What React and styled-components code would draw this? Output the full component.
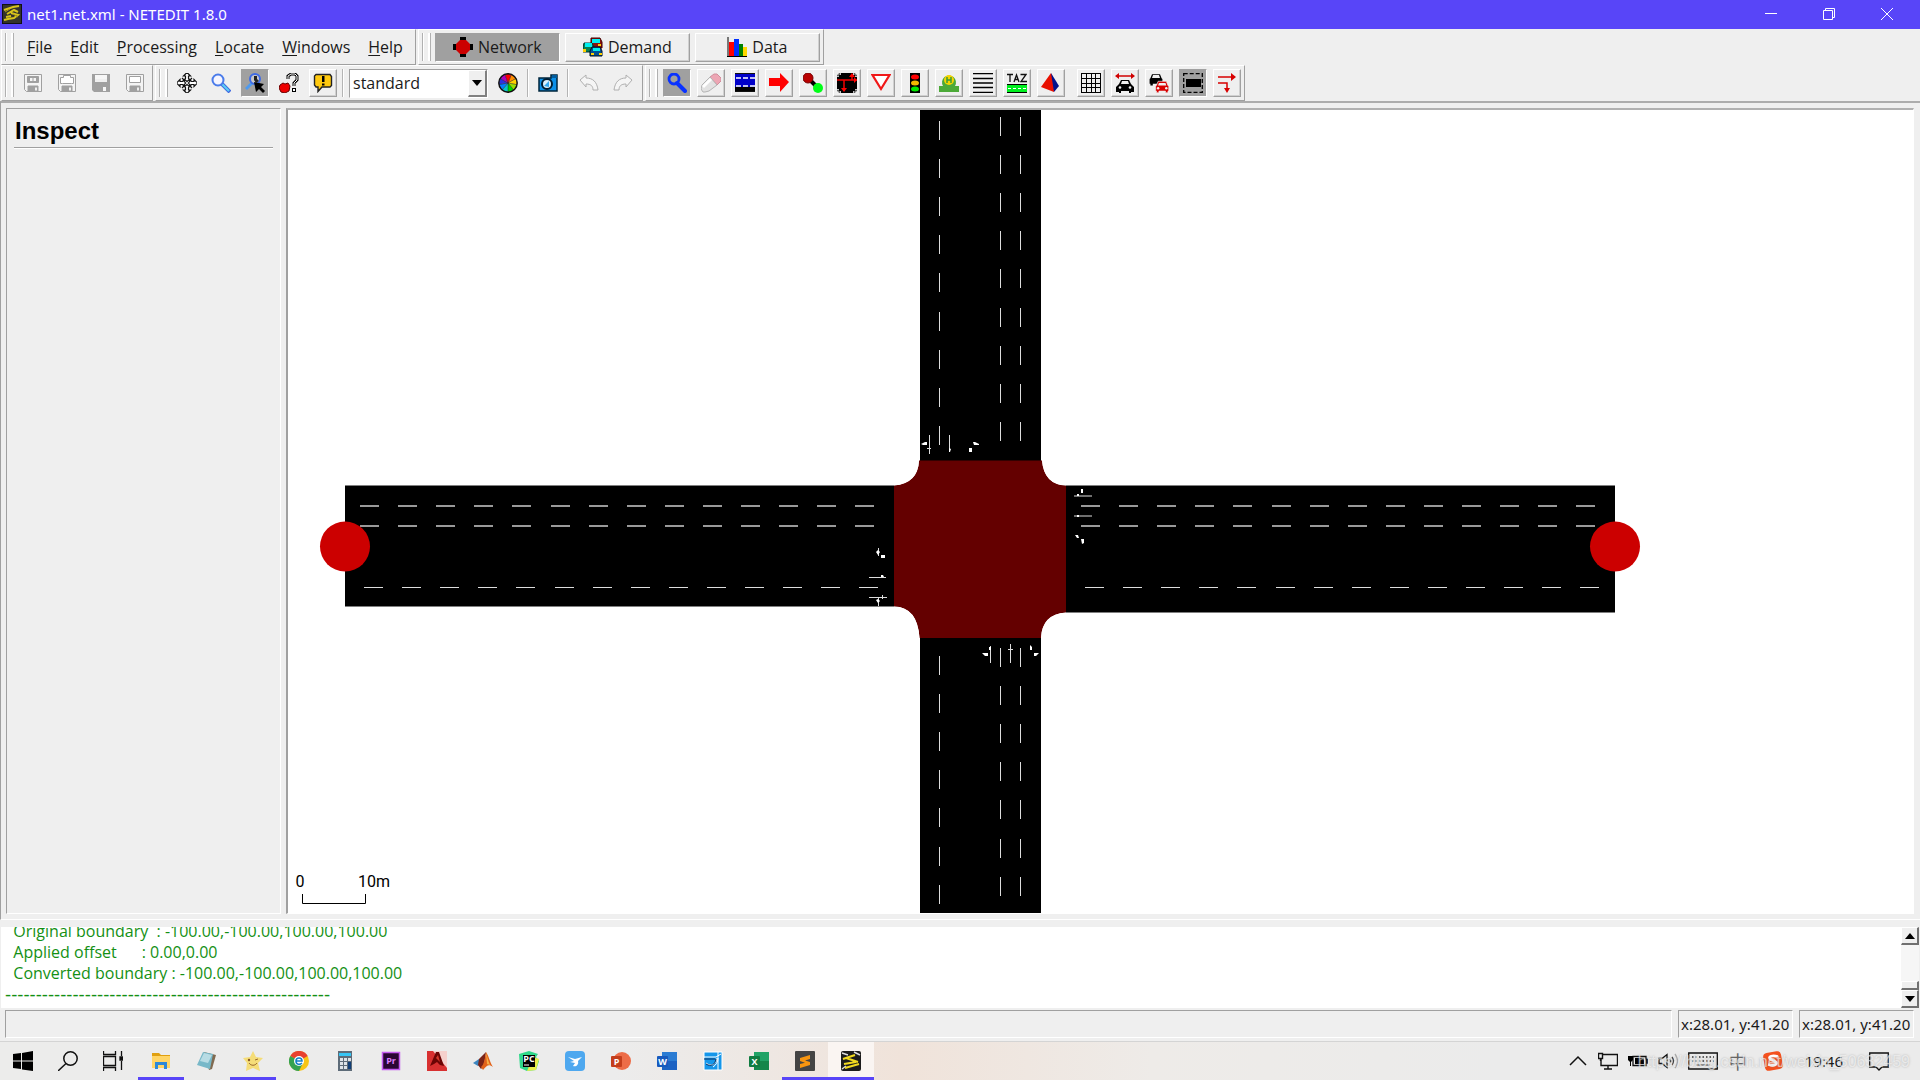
import React, { useState } from "react";
import styled, { createGlobalStyle, css } from "styled-components";

const range = (n) => Array.from({ length: n }, (_, i) => i);

/* ---------- icons, all on a 20x20 grid ---------- */

const wheel = ["#ff8c00", "#ffd000", "#9be000", "#00d800", "#00c8c8", "#0080ff", "#3030e0", "#b000c0", "#ff0000"];

const SumoMark = () => (
  <>
    <path d="M2 6l9-3 6-1M5 10l7-4 4 2M2 16l4-1 6-1 4-3-7-2M4 13l5-1" stroke="#d8c41c" strokeWidth="2" fill="none" />
    <path d="M3 8l5-3M11 10l5 3" stroke="#a8941a" fill="none" />
  </>
);

const diskIcon = (inner) => (
  <g fill="none" stroke="#a0a0a0">
    <path d="M1.500 1.500h17v17h-15l-2-2z" fill="#f4f4f4" />
    {inner}
    <path d="M5 18v-5h10v5z" fill="#a0a0a0" />
    <path d="M12 14.500h2v3h-2z" fill="#efefef" stroke="none" />
  </g>
);

const carPath = "M3 9l2-5h10l2 5 1 1v6h-1v2h-3v-2H6v2H3v-2H2v-6z";

const icons = {
  app: (
    <>
      <path d="M0 0h20v20H0z" fill="#111" />
      <path d="M1 1h18v18H1z" fill="#33332c" />
      <SumoMark />
    </>
  ),
  saveNet: diskIcon(
    <>
      <path d="M4.500 3.500h11v6h-11z" fill="#a0a0a0" />
      <path d="M7 5h6v3H7z" fill="#f4f4f4" stroke="none" />
      <path d="M10 3v7" />
    </>
  ),
  saveAdd: diskIcon(<path d="M5.500 10.500h-2v-6h3v-2h7v2h3v6h-2z" fill="#fff" />),
  saveTls: (
    <g fill="#a0a0a0">
      <path d="M1 1h18v18H3l-2-2z" />
      <path d="M4 2h12v7H4z" fill="#efefef" />
      <path d="M4 2h12v4H4zM12 14h3v4h-3z" fill="#f6f6f6" />
    </g>
  ),
  saveTaz: diskIcon(<path d="M4.500 3.500h11v6h-11z" fill="#fff" />),
  recenter: (
    <g fill="#fff" stroke="#111" strokeWidth="1.200">
      {[0, 90, 180, 270].map((a) => (
        <path key={a} transform={`rotate(${a} 10 10)`} d="M10 -.5l3.500 3.500h-2v2.500l1 1-2.500 2-2.500-2 1-1V3h-2z" />
      ))}
      <path d="M5 5l3 3M15 5l-3 3M5 15l3-3M15 15l-3-3" />
    </g>
  ),
  zoom: (
    <>
      <path d="M11 11l8 8" stroke="#4169e1" strokeWidth="4" />
      <path d="M11 11l7 7" stroke="#5bd0f5" strokeWidth="2" />
      <circle cx="7" cy="7" r="5.500" fill="#f5f5ff" stroke="#4a7bea" strokeWidth="2" />
    </>
  ),
  zoomStyle: (
    <>
      <path d="M7 10l-6 6" stroke="#4d9af0" strokeWidth="3" />
      <circle cx="10" cy="6" r="5" fill="#c8c8c8" stroke="#3e6ae6" strokeWidth="2" />
      <path d="M9 3h3v3l2 2-3 2-2-3z" fill="#222" />
      <path d="M9 9l10 2-3 3 4 4-2 2-4-4-3 3z" fill="#000" />
    </>
  ),
  locate: (
    <>
      <path d="M1 12l3-2 2 1 3-1 2 3-1 5-4 2-4-1-2-4z" fill="#ee0000" stroke="#600" />
      <path d="M9 6V3l3-2h4l2 2v4l-3 3v3" fill="none" stroke="#000" strokeWidth="3" />
      <path d="M9 6V3l3-2h4l2 2v4l-3 3v3" fill="none" stroke="#fff" />
      <path d="M13 15h4v4h-4z" />
      <path d="M14 16h2v2h-2z" fill="#fff" />
    </>
  ),
  tooltip: (
    <>
      <path d="M3 1.500h14l1.500 2v9L17 14H9l-4 4.500V14H3l-1.500-2v-9z" fill="#ffc90e" stroke="#222" strokeWidth="1.400" />
      <path d="M9 3h2.500v6H9zM9 10.500h2.500v2H9z" />
    </>
  ),
  wheel: (
    <>
      {wheel.map((c, i) => {
        const a = (i * 2 * Math.PI) / 9 - 1.2;
        const b = a + (2 * Math.PI) / 9;
        return (
          <path
            key={c}
            fill={c}
            stroke="#222"
            strokeWidth=".4"
            d={`M10 10L${10 + 9 * Math.cos(a)} ${10 + 9 * Math.sin(a)}A9 9 0 0 1 ${10 + 9 * Math.cos(b)} ${10 + 9 * Math.sin(b)}z`}
          />
        );
      })}
      <circle cx="10" cy="10" r="9.200" fill="none" stroke="#111" strokeWidth="1.400" />
    </>
  ),
  camera: (
    <>
      <path d="M1 5h12V2h6v16H1z" fill="#0a8fe8" stroke="#00263c" strokeWidth="1.500" />
      <path d="M14 2h5v3h-5z" fill="#035c9c" />
      <circle cx="9" cy="11" r="5" fill="#d8f0ff" stroke="#001c30" strokeWidth="2" />
      <path d="M6 13l5-5v6z" fill="#33a7f0" />
    </>
  ),
  undo: <path d="M1 7l6-5v3c7 0 11 4 12 12h-5c0-4-2-6-7-6v3z" fill="#f5f5f5" stroke="#b0b0b0" />,
  redo: <path d="M19 7l-6-5v3C6 5 2 9 1 17h5c0-4 2-6 7-6v3z" fill="#f5f5f5" stroke="#b0b0b0" />,
  inspect: (
    <>
      <path d="M10 10l8 8" stroke="#0a32ff" strokeWidth="4" strokeLinecap="round" />
      <circle cx="7" cy="6" r="5" fill="none" stroke="#0a32ff" strokeWidth="2.800" />
    </>
  ),
  eraser: (
    <>
      <path d="M9 4l4-3h3l4 4v3l-4 4z" fill="#eda6b4" stroke="#d08e9c" />
      <path d="M9 4l7 8-8 6-4 1H2l-2-3 1-4z" fill="#e2e2e2" stroke="#b4b4b4" />
      <path d="M1 13l8-8 2 2-8 8z" fill="#fff" />
    </>
  ),
  edge: (
    <>
      <path d="M0 0h20v14H0z" fill="#0000c8" />
      <path d="M0 14h20v5H0z" />
      <path d="M0 0h20v1H0zM0 18h20v1H0z" fill="#111" />
      <path d="M1 5h5M8 5h5M15 5h5M1 13h5M8 13h5M15 13h5" stroke="#fff" strokeWidth="1.400" />
    </>
  ),
  move: <path d="M0 5h11V0l9 9-9 10v-6H0z" fill="#ff0000" />,
  connect: (
    <>
      <path d="M5 5l10 10" stroke="#000" strokeWidth="4" />
      <circle cx="5" cy="5" r="5" fill="#b80000" stroke="#700" />
      <circle cx="15" cy="15" r="5" fill="#00ff18" />
    </>
  ),
  prohibit: (
    <>
      <path d="M0 0h20v20H0z" />
      <path d="M0 7h20M7 7v10M15 7V2" stroke="#f00000" strokeWidth="1.500" />
      <path d="M4 15h6l-3 4zM12 4l3-4 3 4zM17 4l3 3-3 3z" fill="#f00" />
      <path d="M1 0v4M19 0v4M0 1h4M16 1h4M1 16v4M19 16v4M0 19h4M16 19h4" stroke="#fff" strokeWidth="1.500" strokeDasharray="1.500 1" />
    </>
  ),
  priority: <path d="M1.500 2h17L10 16z" fill="#fff" stroke="#f01818" strokeWidth="2.200" />,
  light: (
    <>
      <path d="M5 0h10v20H5z" />
      <ellipse cx="10" cy="4" rx="4" ry="2.500" fill="#f00" />
      <ellipse cx="10" cy="10" rx="4" ry="2.500" fill="#f0b800" />
      <ellipse cx="10" cy="16" rx="4" ry="2.500" fill="#00e800" />
    </>
  ),
  stop: (
    <>
      <path d="M0 13h4A7 7 0 1 1 16 13h4v6H0z" fill="#4caa38" />
      <circle cx="10" cy="7" r="5" fill="#f5d400" />
      <path d="M8 4v6M12 4v6M8 7h4" stroke="#3d9a35" strokeWidth="1.500" />
    </>
  ),
  crossing: <path d="M0 .5h20M0 5.500h20M0 10h20M0 14.500h20M0 19.500h20" stroke="#000" strokeWidth="1.700" />,
  taz: (
    <>
      <path d="M0 1.500h6M3 1v8M7 9l2.500-7L12 9M8 6.500h3M13.500 1.500H19L14 8.500h6" stroke="#111" strokeWidth="1.300" fill="none" />
      <path d="M0 12h20v8H0z" fill="#00f020" />
      <path d="M0 11.500h20M0 19.500h20" stroke="#000" />
      <path d="M1 15.500h18" stroke="#fff" strokeDasharray="3 2" />
    </>
  ),
  shape: (
    <>
      <path d="M10 0l8 13-5 6-3-5z" fill="#00128c" />
      <path d="M10 0L0 14l13 5z" fill="#e81000" />
    </>
  ),
  grid: (
    <g fill="none" stroke="#000" shapeRendering="crispEdges">
      <path d="M.5.500h19v19H.5z" />
      <path d="M0 5.500h20M0 10.500h20M0 14.500h20M5.500 0v20M10.500 0v20M14.500 0v20" />
    </g>
  ),
  junctionShape: (
    <>
      <path d="M2 3h16" stroke="#d00000" strokeWidth="1.500" />
      <path d="M0 3l4-3v6zM20 3l-4-3v6z" fill="#d00000" />
      <path d="M1 14l3-3 2-4h8l2 4 3 3v5h-3v1h-2v-2H6v2H4v-1H1z" />
      <path d="M6 11l1-3h6l1 3z" fill="#efefef" />
      <circle cx="5" cy="14.500" r="1.300" fill="#efefef" />
      <circle cx="15" cy="14.500" r="1.300" fill="#efefef" />
    </>
  ),
  demandSpread: (
    <>
      <path transform="translate(-1 -2) scale(.8)" d={carPath} />
      <path d="M3 5l1-3h6l1 3z" fill="#efefef" />
      <g transform="translate(5 5) scale(.82)">
        <path d={carPath} fill="#d80000" stroke="#efefef" strokeWidth=".8" />
        <path d="M5 9l1-3h8l1 3z" fill="#efefef" />
        <circle cx="5" cy="12.500" r="1.500" fill="#efefef" />
        <circle cx="15" cy="12.500" r="1.500" fill="#efefef" />
      </g>
    </>
  ),
  selectArea: (
    <>
      <path d="M.7.700h18.600v18.600H.7z" fill="none" stroke="#000" strokeWidth="1.300" strokeDasharray="4 2" />
      <path d="M3 6h15v8H3z" />
    </>
  ),
  chain: (
    <>
      <path d="M1 4h14M1 10h9v6" stroke="#d80000" strokeWidth="1.500" fill="none" />
      <path d="M14 0l5 4-5 4zM7 15h6l-3 5z" fill="#d80000" />
    </>
  ),
  network: (
    <>
      <path d="M7 0h6v20H7zM0 7h20v6H0z" />
      <path d="M7 3h6l4 4v6l-4 4H7l-4-4V7z" fill="#cc0000" />
    </>
  ),
  demand: (
    <g strokeWidth="1">
      <path d="M8 1h9l2 4v6H8z" fill="#8c1010" stroke="#400" />
      <path d="M9 2h8v4H9z" fill="#00f0f0" />
      <path d="M15 7h3v2h-3z" fill="#ffd000" />
      <path d="M1 6h8l2 4v5H0v-5z" fill="#0a8050" stroke="#033" />
      <path d="M2 6h7v4H2z" fill="#00f0f0" />
      <path d="M0 12h3v3H0z" fill="#ffd000" />
      <path d="M9 10h8l2 4v5H7v-5z" fill="#004f90" stroke="#012" />
      <path d="M10 11h7v3h-7z" fill="#00f0f0" />
      <path d="M8 16h3v2H8zM16 16h3v2h-3z" fill="#ffd000" />
    </g>
  ),
  data: (
    <>
      <path d="M2 5h5v15H2z" fill="#ff0000" />
      <path d="M7 2h5v18H7z" fill="#0030ff" />
      <path d="M12 7h4v13h-4z" fill="#008000" />
      <path d="M16 10h4v10h-4z" fill="#ffd800" />
      <path d="M1 0v20M0 19.500h20" stroke="#000" />
    </>
  ),
  windows: <path d="M0 3l8-1v7.500H0zM9 2l11-2v9.500H9zM0 10.500h8V18l-8-1zM9 10.500h11V20L9 18.500z" />,
  search: (
    <g fill="none" stroke="#111" strokeWidth="1.500">
      <circle cx="12.500" cy="7.500" r="6.700" />
      <path d="M8 12.500L0 20" />
    </g>
  ),
  taskView: (
    <g fill="none" stroke="#111" strokeWidth="1.300">
      <path d="M.5 0v3.500h12V0M.5 20v-3.500h12V20M.5 5.500h12v9H.5zM18.500 0v5M18.500 10v9" />
      <path d="M17 6h3v3h-3z" fill="#111" />
    </g>
  ),
  folder: (
    <>
      <path d="M1 2h7l2 2h9v6H1z" fill="#e0a010" />
      <path d="M1 5h18v12H1z" fill="#ffd566" />
      <path d="M4 18v-7h12v7h-3v-4H7v4z" fill="#2b88d8" />
    </>
  ),
  notes: (
    <>
      <path d="M7 1l12 3-4 14-3 1z" fill="#806a50" />
      <path d="M6 1l10 2-3 15-13-4z" fill="#78b8c8" />
      <path d="M7 2l8 2-4 8-8-2z" fill="#b8dce4" />
    </>
  ),
  star: (
    <>
      <path d="M10 0l3 6 7 1-5 5 2 8-7-3-7 3 1-8-4-5 7-1z" fill="#f5dd78" />
      <path d="M6 12c2 3 6 3 8 0M12 9l3-1" stroke="#9a6a30" fill="none" />
      <circle cx="6" cy="9" r="1.200" fill="#8a5a28" />
    </>
  ),
  chrome: (
    <>
      <circle cx="10" cy="10" r="10" fill="#f7c515" />
      <path d="M10 10L1.300 5A10 10 0 0 1 18.700 5z" fill="#e8402f" />
      <path d="M10 10L1.300 5A10 10 0 0 0 10 20l4-8z" fill="#35a251" />
      <circle cx="10" cy="10" r="5" fill="#fff" />
      <path d="M7 10h6c0-4-6-4-6 0s4 4 6 2" fill="none" stroke="#1680c8" strokeWidth="1.600" />
    </>
  ),
  calc: (
    <>
      <path d="M3 0h14v20H3z" fill="#5d6b78" />
      <path d="M4 2h12v3H4z" fill="#35c5f5" />
      <path d="M5 7h3v3H5zM9 7h3v3H9zM13 7h3v3h-3zM5 11h3v3H5zM9 11h3v3H9zM5 15h3v3H5zM9 15h3v3H9z" fill="#dde3e8" />
      <path d="M13 11h3v7h-3z" fill="#123f78" />
    </>
  ),
  acad: (
    <>
      <path d="M0 0h20v20H0z" fill="#d83030" />
      <path d="M6 0h14v17z" fill="#f6d0cc" />
      <path d="M3 15L9 1h3l5 14-4-1-3-3-3 2z" fill="#6c0505" />
      <path d="M9 7l2-3 2 7z" fill="#d63a2a" />
    </>
  ),
  matlab: (
    <>
      <path d="M0 12l6-4 3 4-4 3z" fill="#3c86c0" />
      <path d="M6 8l7-7-2 14-3 3-3-4z" fill="#7a2418" />
      <path d="M13 1c3 4 4 11 7 15-4-3-6-2-10 3l-2-3c3-2 4-9 5-15z" fill="#e2631a" />
      <path d="M13 1c1 4 2 9 4 13l-3-1z" fill="#f6b048" />
    </>
  ),
  visual: (
    <>
      <path d="M1 1h18v18H1z" fill="#1496ea" stroke="#fff" />
      <path d="M1 6h12l5-3M3 12c5 4 10 2 11-5M10 16c3-2 5-5 5-9M15 1v18" fill="none" stroke="#fff" />
      <path d="M1 8h11M3 13c5 3 9 1 10-5" stroke="#0a2f60" fill="none" />
    </>
  ),
  bird: (
    <>
      <rect width="20" height="20" rx="4" fill="#4ea8ef" />
      <path d="M3 6l7 2 7-2-4 4c1 4-2 6-5 5l2-3-5-1 4-1z" fill="#fff" />
    </>
  ),
  sublime: (
    <>
      <rect width="20" height="20" rx="1" fill="#444" />
      <path d="M5 7l10-3v4l-5 1.500 5 1.500v3L5 17v-4l5-1.300L5 10z" fill="#f79510" />
    </>
  ),
  netedit: (
    <>
      <rect width="20" height="20" rx="2" fill="#1c1c1c" />
      <path d="M1 2l6 2M13 1l6 3M1 18l4-3" stroke="#ddd" strokeWidth="1.500" />
      <path d="M2 8l12-4M5 7l12 4M3 13l12-2M4 17l14-4" stroke="#f2da20" strokeWidth="2.200" fill="none" />
    </>
  ),
  chevron: <path d="M2 14l8-8 8 8" fill="none" stroke="#111" strokeWidth="1.500" />,
  monitor: (
    <g fill="none" stroke="#111" strokeWidth="1.400">
      <path d="M5 3.500h14.500v11H3V8M6 18h8M10 14v4" />
      <path d="M.5 2.500h4v5h-4zM2.500 7v3" />
    </g>
  ),
  battery: (
    <>
      <path d="M5 5.500h13v9H5zM19 8h1v4h-1z" fill="none" stroke="#111" strokeWidth="1.300" />
      <path d="M7 7h9v6H7zM0 5h5v4l-2 2v4H2v-4L0 9z" />
    </>
  ),
  volume: (
    <g fill="none" strokeWidth="1.300">
      <path d="M1 7.500h3l5-4v13l-5-4H1z" stroke="#111" />
      <path d="M12 8q1.500 2 0 4M14 6q3 4 0 8" stroke="#444" />
      <path d="M17 3q5 7 0 14" stroke="#aaa" />
    </g>
  ),
  sogou: (
    <>
      <rect x="1" y="1" width="18" height="18" rx="4" transform="rotate(-10 10 10)" fill="#f4511e" />
      <path d="M15 5.500c-9-2-11 2-5 4s4 6-5 4" fill="none" stroke="#fff" strokeWidth="2.800" />
    </>
  ),
  notice: <path d="M.7 2h18.600v14H13l-3 3-3-3H.7z" fill="none" stroke="#111" strokeWidth="1.300" />,
};

const Icon = ({ name }) => <Glyph viewBox="0 0 20 20" aria-hidden="true">{icons[name]}</Glyph>;

const office = {
  powerpoint: { letter: "P", dark: "#c43e1c", light: "#ed6c47", round: true },
  word: { letter: "W", dark: "#185abd", light: "#2b7cd3" },
  excel: { letter: "X", dark: "#107c41", light: "#21a366" },
};

const TaskIcon = ({ name }) => {
  if (office[name]) {
    const { letter, dark, light, round } = office[name];
    return (
      <Glyph viewBox="0 0 20 20">
        {round ? <circle cx="11" cy="10" r="9" fill={light} /> : <path d="M5 1h15v18H5z" fill={light} />}
        {!round && <path d="M5 10h15v9H5z" fill={dark} opacity=".75" />}
        <rect y="5" width="11" height="11" rx="1" fill={dark} />
        <Letter x="5.500" y="14" fill="#fff">{letter}</Letter>
      </Glyph>
    );
  }
  if (name === "premiere") {
    return (
      <Glyph viewBox="0 0 20 20">
        <path d="M1.500 1.500h17v17h-17z" fill="#2a0634" stroke="#c45cf0" strokeWidth="1.500" />
        <Letter x="10" y="13" fill="#dd80ff">Pr</Letter>
      </Glyph>
    );
  }
  if (name === "pycharm") {
    return (
      <Glyph viewBox="0 0 20 20">
        <path d="M0 3l10-3 9 3-2 3 3 4-3 9-9 1-7-3z" fill="#2fd88a" />
        <path d="M14 6l6 2-3 11-9 1z" fill="#e8ee4a" />
        <path d="M4 4h12v12H4z" />
        <Letter x="10" y="11" fill="#fff">PC</Letter>
        <path d="M5 14h5" stroke="#fff" />
      </Glyph>
    );
  }
  return <Icon name={name} />;
};

/* ---------- network drawing ---------- */

const Dashes = ({ x, y, count, vertical, tone = "#ddd", weight = 1 }) =>
  range(count).map((i) => {
    const step = Math.round(i * 38.1);
    return vertical ? (
      <rect key={i} x={x} y={y + step} width={weight} height="19" fill={tone} />
    ) : (
      <rect key={i} x={x + step} y={y} width="19" height={weight} fill={tone} />
    );
  });

const NetworkView = () => (
  <NetSvg viewBox="288 110 1625 803" preserveAspectRatio="xMidYMid slice" role="img" aria-label="Network">
    <path d="M920 110h121v803H920zM345 485.500h560v121H345zM1055 485.500h560v127h-560z" />
    <path
      d="M919 460.500h123q2 24 24 25V612.500q-24 2-25 25.500H919.500q-2-31-25.500-31.500V485.500q24-2 25-25z"
      fill="#640000"
    />
    <path d="M894 606.500v31.500h25.500q-2-31-25.500-31.500zM1066 612.500v25.500h-25q1-24 25-25.500zM894 485.500v-25h25q-1 23-25 25zM1066 485.500v-25h-24q2 24 24 25z" fill="#fff" />
    <g shapeRendering="crispEdges">
      <Dashes x={360} y={505} count={14} tone="#999" weight={2} />
      <Dashes x={360} y={525} count={14} tone="#999" weight={2} />
      <Dashes x={364} y={587} count={14} />
      <Dashes x={1081} y={505} count={14} tone="#999" weight={2} />
      <Dashes x={1081} y={525} count={14} tone="#999" weight={2} />
      <Dashes x={1085} y={587} count={14} />
      <Dashes vertical x={939} y={121} count={9} />
      <Dashes vertical x={1000} y={117} count={9} />
      <Dashes vertical x={1020} y={117} count={9} />
      <Dashes vertical x={939} y={656} count={7} />
      <Dashes vertical x={1000} y={648} count={7} />
      <Dashes vertical x={1020} y={648} count={7} />
    </g>
    {/* turning arrows in front of the stop lines */}
    <g stroke="#ddd" fill="none">
      <path d="M929.500 435v19M949.500 435v17M927 448.500h4M990.500 646v17M1010.500 644v19M1008 649.500h5" />
      <path d="M1074 496h18M1074 516h18M869 577.500h17M869 597.500h18M878.500 548v8M878.500 598v8M882.500 595v4" />
    </g>
    <path
      d="M921 444l4-2h2v3h-4zM949 448l2 1-1 3h-1zM969 448h3v4h-3zM973 442h2l4 2v1h-5zM1081 489h2v4h-2zM1077 494h2v2h-2zM1077 515h2v2h-2zM1075 535h3l1 3h-2zM1081 539h3v4l-2 1zM876 552l2-2 2 2-2 3zM881 555h4v3h-4zM881 575h2l1 2h-3zM876 600l2-1 2 2-2 2zM982 653l3 0h3v3h-3zM989 647h2v3h-2zM1030 645l2 2v3h-2zM1034 653h5l-3 3h-2z"
      fill="#fff"
    />
    <circle cx="345" cy="546.500" r="25" fill="#cc0000" />
    <circle cx="1615" cy="546.500" r="25" fill="#cc0000" />
    <path d="M302.500 894v9.500h63V894" fill="none" stroke="#000" />
    <ScaleText x="300" y="887">0</ScaleText>
    <ScaleText x="374" y="887">10m</ScaleText>
  </NetSvg>
);

/* ---------- window ---------- */

const menus = ["File", "Edit", "Processing", "Locate", "Windows", "Help"];
const modes = [
  ["Network", "network"],
  ["Demand", "demand"],
  ["Data", "data"],
];
const fileTools = ["saveNet", "saveAdd", "saveTls", "saveTaz"];
const editTools = ["inspect", "eraser", "edge", "move", "connect", "prohibit", "priority", "light", "stop", "crossing", "taz", "shape"];
const viewTools = ["grid", "junctionShape", "demandSpread", "selectArea", "chain"];
const log = [
  "  Original boundary  : -100.00,-100.00,100.00,100.00",
  "  Applied offset      : 0.00,0.00",
  "  Converted boundary : -100.00,-100.00,100.00,100.00",
];
const tasks = ["folder", "notes", "star", "chrome", "calc", "premiere", "acad", "matlab", "pycharm", "bird", "powerpoint", "word", "visual", "excel", "sublime", "netedit"];
const running = ["folder", "star", "sublime", "netedit"];

const App = () => {
  const [mode, setMode] = useState("Network");
  const [tool, setTool] = useState("inspect");

  return (
    <>
      <GlobalStyle />
      <Window>
        <TitleBar>
          <Icon name="app" />
          <Title>net1.net.xml - NETEDIT 1.8.0</Title>
          <CaptionButton aria-label="Minimize">
            <CaptionSvg><path d="M0 5.500h12" /></CaptionSvg>
          </CaptionButton>
          <CaptionButton aria-label="Restore">
            <CaptionSvg><path d="M.5 2.500h9v9h-9zM2.500 2.500v-2h9v9h-2" /></CaptionSvg>
          </CaptionButton>
          <CaptionButton aria-label="Close">
            <CaptionSvg><path d="M0 0l12 12M12 0L0 12" /></CaptionSvg>
          </CaptionButton>
        </TitleBar>

        <ToolRow>
          <MenuBar>
            <Grip />
            <MenuList>
              {menus.map((m) => (
                <MenuButton key={m}>
                  <u>{m[0]}</u>
                  {m.slice(1)}
                </MenuButton>
              ))}
            </MenuList>
          </MenuBar>
          <ModeBar>
            <Grip />
            {modes.map(([label, icon]) => (
              <ModeButton key={label} $pressed={mode === label} onClick={() => setMode(label)}>
                <Icon name={icon} />
                {label}
              </ModeButton>
            ))}
          </ModeBar>
        </ToolRow>

        <ToolRow>
          <ToolBar>
            <Grip />
            {fileTools.map((t) => (
              <ToolButton key={t} $flat disabled aria-label={t}><Icon name={t} /></ToolButton>
            ))}
          </ToolBar>
          <ToolBar>
            <Grip />
            <ToolButton $flat aria-label="Recenter"><Icon name="recenter" /></ToolButton>
            <ToolButton $flat aria-label="Zoom"><Icon name="zoom" /></ToolButton>
            <ToolButton $pressed aria-label="Zoom style"><Icon name="zoomStyle" /></ToolButton>
            <ToolButton $flat aria-label="Locate"><Icon name="locate" /></ToolButton>
            <ToolButton aria-label="Tooltips"><Icon name="tooltip" /></ToolButton>
            <Divider />
            <Combo>
              <select aria-label="Coloring scheme" defaultValue="standard">
                <option>standard</option>
              </select>
              <ComboArrow><Arrow $down /></ComboArrow>
            </Combo>
            <ToolButton $flat aria-label="Colors"><Icon name="wheel" /></ToolButton>
            <Divider />
            <ToolButton $flat aria-label="Snapshot"><Icon name="camera" /></ToolButton>
            <Divider />
            <HistoryGroup>
              <ToolButton $flat disabled aria-label="Undo"><Icon name="undo" /></ToolButton>
              <ToolButton $flat disabled aria-label="Redo"><Icon name="redo" /></ToolButton>
            </HistoryGroup>
          </ToolBar>
          <ToolBar>
            <Grip />
            {editTools.map((t) => (
              <ToolButton key={t} $pressed={tool === t} aria-label={t} onClick={() => setTool(t)}>
                <Icon name={t} />
              </ToolButton>
            ))}
            <Spacer />
            {viewTools.map((t) => (
              <ToolButton key={t} $pressed={t === "selectArea"} aria-label={t}><Icon name={t} /></ToolButton>
            ))}
          </ToolBar>
        </ToolRow>

        <Workspace>
          <SidePanel>
            <PanelTitle>Inspect</PanelTitle>
          </SidePanel>
          <Canvas><NetworkView /></Canvas>
        </Workspace>

        <LogArea>
          <LogText role="log">
            {log.map((line) => <LogLine key={line}>{line}</LogLine>)}
            <LogRule>{"-".repeat(53)}</LogRule>
          </LogText>
          <ScrollBar>
            <ScrollButton aria-label="Scroll up"><Arrow /></ScrollButton>
            <ScrollThumb />
            <ScrollButton aria-label="Scroll down"><Arrow $down /></ScrollButton>
          </ScrollBar>
        </LogArea>

        <StatusBar>
          <StatusField $grow />
          <StatusField>x:28.01, y:41.20</StatusField>
          <StatusField>x:28.01, y:41.20</StatusField>
        </StatusBar>

        <TaskBar>
          <SystemButtons>
            {["windows", "search", "taskView"].map((t) => (
              <SystemButton key={t} aria-label={t}><Icon name={t} /></SystemButton>
            ))}
          </SystemButtons>
          {tasks.map((t) => (
            <TaskButton key={t} aria-label={t} $running={running.includes(t)} $active={t === "netedit"}>
              <TaskIcon name={t} />
            </TaskButton>
          ))}
          <Tray>
            <Icon name="chevron" />
            <Icon name="monitor" />
            <Icon name="battery" />
            <Icon name="volume" />
            <KeyboardSvg viewBox="0 0 30 20">
              <path d="M.7 2h28.600v16H.7z" fill="none" stroke="#111" strokeWidth="1.300" />
              <path d="M4 6h22M4 10h22" stroke="#333" strokeWidth="1.500" strokeDasharray="1.500 2" />
              <path d="M8 14h14" stroke="#333" />
            </KeyboardSvg>
            <Ime>中</Ime>
            <Icon name="sogou" />
            <Clock>19:46</Clock>
            <Icon name="notice" />
          </Tray>
          <Watermark>https://blog.csdn.net/weixin_50632459</Watermark>
        </TaskBar>
      </Window>
    </>
  );
};

export default App;

const GlobalStyle = createGlobalStyle`
  * {
    box-sizing: border-box;
  }

  body {
    margin: 0;
    background: #efefef;
    color: #1a1a1a;
    font: 16px/20px "Open Sans", "Noto Sans", sans-serif;
  }

  button, select {
    margin: 0;
    padding: 0;
    border: 0;
    background: none;
    color: inherit;
    font: inherit;
  }
`;

const raised = css`
  border: 1px solid;
  border-color: #fff #a0a0a0 #a0a0a0 #fff;
`;

const sunken = css`
  border: 1px solid;
  border-color: #a0a0a0 #fff #fff #a0a0a0;
`;

const Window = styled.div`
  display: flex;
  flex-direction: column;
  min-height: 100vh;
`;

const Glyph = styled.svg`
  display: block;
  flex: none;
  width: 20px;
  height: 20px;
`;

const Letter = styled.text`
  font: bold 9px "Open Sans", sans-serif;
  text-anchor: middle;
`;

const TitleBar = styled.header`
  display: flex;
  align-items: center;
  height: 29px;
  padding: 0 4px 2px 2px;
  background: #5845f8;
  color: #fff;
`;

const Title = styled.h1`
  flex: 1;
  margin: 0 5px;
  font: 15px/20px "Noto Sans", sans-serif;
`;

const CaptionButton = styled.button`
  display: grid;
  place-items: center;
  width: 58px;
  height: 27px;
`;

const CaptionSvg = styled.svg`
  width: 12px;
  height: 12px;
  fill: none;
  stroke: #fff;
`;

const ToolRow = styled.div`
  display: flex;
  gap: 2px;
  height: 36px;
  padding-left: 1px;
`;

const ToolBar = styled.div`
  ${raised}
  display: flex;
  align-items: center;
  gap: 6px;
  padding: 0 3px;
`;

const MenuBar = styled(ToolBar)`
  gap: 0;
`;

const MenuList = styled.div`
  display: flex;
  padding-left: 5px;
`;

const ModeBar = styled(ToolBar)`
  gap: 5px;
`;

const Grip = styled.i`
  width: 9px;
  height: 28px;
  margin-right: -1px;
  border: solid #b0b0b0;
  border-width: 0 1px;
  box-shadow: inset 1px 0 #fff, inset -2px 0 #fff;
`;

const MenuButton = styled.button`
  padding: 0 9px;

  & u {
    text-underline-offset: 2px;
  }
`;

const PressButton = styled.button`
  ${({ $pressed, $flat }) => ($pressed ? sunken : !$flat && raised)}
  display: flex;
  align-items: center;
  justify-content: center;
  background: ${({ $pressed }) => ($pressed ? "#a0a0a0" : "none")};
  box-shadow: ${({ $pressed, $flat }) => ($pressed || $flat ? "none" : "inset -1px -1px #d0d0d0")};
`;

const ModeButton = styled(PressButton)`
  gap: 5px;
  width: 125px;
  height: 29px;
`;

const ToolButton = styled(PressButton)`
  width: 28px;
  height: 28px;
`;

const HistoryGroup = styled.div`
  display: flex;
  gap: 6px;
  padding: 0 2px 0 1px;
`;

const Divider = styled.i`
  width: 2px;
  height: 28px;
  margin: 0 -1px;
  background: #b4b4b4;
  border-right: 1px solid #fff;
`;

const Spacer = styled.i`
  width: 0;
`;

const Combo = styled.div`
  ${sunken}
  display: flex;
  height: 29px;
  background: #fff;

  & select {
    appearance: none;
    width: 118px;
    padding-left: 3px;
  }
`;

const ComboArrow = styled.span`
  ${raised}
  display: grid;
  place-items: center;
  width: 19px;
  background: #efefef;
  border-right: 2px solid #808080;
  border-bottom: 2px solid #808080;
`;

const Arrow = styled.i`
  border: 5px solid transparent;
  border-width: ${({ $down }) => ($down ? "6px 5px 0" : "0 5px 6px")};
  border-color: #000 transparent;
`;

const Workspace = styled.main`
  display: flex;
  flex: 1;
  gap: 5px;
  min-height: 400px;
  padding: 5px 6px 5px 5px;
  border-top: 2px solid #acacac;
  border-left: 1px solid #a0a0a0;
  border-bottom: 1px solid #fff;
`;

const SidePanel = styled.aside`
  ${sunken}
  flex: none;
  width: 275px;
  padding: 9px 7px;
`;

const PanelTitle = styled.h2`
  margin: 0;
  padding: 0 1px 3px;
  border-bottom: 1px solid #a0a0a0;
  box-shadow: 0 1px #fff;
  color: #000;
  font: bold 24px/26px "Liberation Sans", sans-serif;
`;

const Canvas = styled.section`
  position: relative;
  flex: 1;
  border: solid;
  border-width: 2px 1px 1px 2px;
  border-color: #b0b0b0 #fff #fff #a0a0a0;
  background: #fff;
`;

const NetSvg = styled.svg`
  position: absolute;
  inset: 0;
  width: 100%;
  height: 100%;
`;

const ScaleText = styled.text`
  font: 16px Roboto, sans-serif;
  text-anchor: middle;
`;

const LogArea = styled.section`
  display: flex;
  height: 81px;
  margin: 7px 1px 0;
  background: #fff;
  color: #149014;
`;

const LogText = styled.div`
  display: flex;
  flex: 1;
  flex-direction: column;
  justify-content: flex-end;
  overflow: hidden;
  padding: 0 4px 3px;
  line-height: 21px;
  white-space: pre;
`;

const LogLine = styled.div`
  flex: none;
`;

const LogRule = styled(LogLine)`
  font-family: "DejaVu Sans", sans-serif;
  font-size: 17px;
`;

const ScrollBar = styled.div`
  display: flex;
  flex-direction: column;
  justify-content: space-between;
  width: 18px;
  background: #f6f6f6;
`;

const ScrollButton = styled.button`
  ${raised}
  display: grid;
  place-items: center;
  height: 18px;
  background: #efefef;
  border-right: 2px solid #707070;
  border-bottom: 2px solid #707070;
`;

const ScrollThumb = styled.div`
  ${raised}
  height: 9px;
  margin-top: auto;
  background: #efefef;
  border-right: 2px solid #707070;
  border-bottom: 2px solid #707070;
`;

const StatusBar = styled.footer`
  display: flex;
  gap: 6px;
  height: 33px;
  padding: 2px 6px 3px 5px;
`;

const StatusField = styled.div`
  ${sunken}
  flex: ${({ $grow }) => ($grow ? 1 : "none")};
  min-width: 115px;
  padding: 0 2px;
  font: 15px/26px "Noto Sans", sans-serif;
  white-space: nowrap;
`;

const TaskBar = styled.nav`
  position: relative;
  display: flex;
  align-items: stretch;
  height: 39px;
  border-top: 1px solid #d4d4d4;
  background: linear-gradient(90deg, #ececeb 0, #ececec 32%, #f0e3da 47%, #eeebe8 60%, #ebebeb 78%);
`;

const SystemButtons = styled.div`
  display: flex;
  width: 138px;
`;

const SystemButton = styled.button`
  display: grid;
  place-items: center;
  width: 45px;
`;

const TaskButton = styled.button`
  display: grid;
  place-items: center;
  width: 46px;
  padding-top: ${({ $running }) => ($running ? "3px" : 0)};
  background: ${({ $active }) => ($active ? "#faf5f2" : "none")};
  border: solid ${({ $running }) => ($running ? "#5845f8" : "transparent")};
  border-width: ${({ $running }) => ($running ? "0 0 3px" : 0)};
`;

const Tray = styled.div`
  display: flex;
  align-items: center;
  gap: 10px;
  margin-left: auto;
  padding-right: 31px;
`;

const KeyboardSvg = styled.svg`
  width: 30px;
  height: 20px;
`;

const Ime = styled.span`
  padding: 0 6px 0 1px;
  color: #666;
  font: 18px/20px "Noto Sans CJK SC", sans-serif;
`;

const Clock = styled.time`
  padding: 0 16px 0 12px;
  font: 15px/20px "Noto Sans", sans-serif;
`;

const Watermark = styled.span`
  position: absolute;
  right: 10px;
  top: 10px;
  color: rgba(255, 255, 255, 0.6);
  font: 16px/20px "Liberation Sans", sans-serif;
  text-shadow: 0 0 2px rgba(120, 120, 120, 0.5);
  pointer-events: none;
`;
